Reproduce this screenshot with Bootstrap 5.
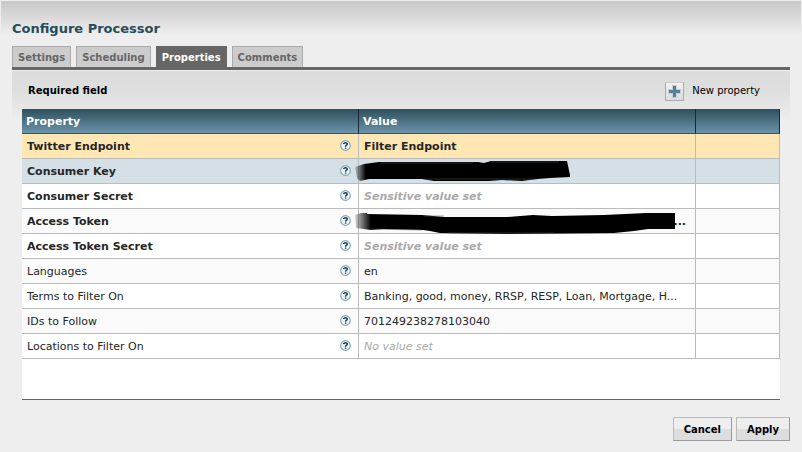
<!DOCTYPE html>
<html lang="en">
<head>
<meta charset="utf-8">
<meta name="viewport" content="width=device-width, initial-scale=1">
<title>Configure Processor</title>
<link href="https://cdn.jsdelivr.net/npm/bootstrap@5.3.0/dist/css/bootstrap.min.css" rel="stylesheet">
<style>
body { font-family: "DejaVu Sans", Verdana, sans-serif; font-size: 11px; line-height: 14px; color: #000; background: #eee; }
.dialog { min-height: 100vh; padding: 21px 11px 10px; border: 1px solid #eee; background: linear-gradient(#c8c8c8, #eee 34px) no-repeat #eee; }
.dialog-title { font-size: 13px; line-height: 14px; color: #264c5a; margin: 0 0 10px; }
.tabs { border-bottom: 3px solid #666; gap: 5px; }
.tabs .nav-link { height: 21px; padding: 4px 5px 0; border: 1px solid #aaa; border-bottom: 0; border-radius: 0; background: #ccc; color: #666; font-size: 10px; font-weight: 700; }
.tabs .nav-link.active { background: #666; border-color: #666; color: #fff; }
.panel { margin-top: 1px; padding: 0 10px; background: linear-gradient(#dcdcdc, #dfdfdf 20px, #eee 50px) no-repeat; }
.panel-bar { height: 38px; padding: 2px 20px 0 6px; font-size: 10px; }
.add-btn { width: 19px; height: 19px; border: 1px solid #aaa; border-top-color: #ccc; background: linear-gradient(#f2f2f2, #ddd); }
.grid-box { background: #fff; border-bottom: 1px solid #666; }
.props { table-layout: fixed; margin: 0; width: 100%; border-collapse: separate; border-spacing: 0; color: #262626; }
.props th, .props td { height: 25px; padding: 2px 9px 0 5px; vertical-align: middle; border-right: 1px solid #bbb; border-bottom: 1px solid #bbb; white-space: nowrap; }
.props thead th { padding-left: 4px; color: #fff; border-right-color: #152c38; border-bottom-color: #2f5566; background: linear-gradient(#2f505c, #6b93aa); }
.col-main { width: 44.46%; }
.props tbody th { font-weight: 400; padding-right: 7px; }
.props tbody .required > * { font-weight: 700; }
.props tbody tr:nth-child(even) { background: #fafafa; }
.props tbody tr.picked { background: #ffe7b3; }
.props tbody tr.hovered { background: #d4dfe6; }
.props .unset { color: #aaa; font-style: italic; }
.help { width: 11px; height: 11px; }
.value-cell { position: relative; }
.redaction { position: absolute; left: -5px; top: 0; z-index: 1; }
.ellipsis-end { display: block; text-align: right; }
.actions { margin-top: 17px; }
.action { height: 24px; padding: 1px 10px 0; border: 1px solid #bbb; border-right-color: #999; border-bottom-color: #999; border-radius: 0; background: linear-gradient(#eee 50%, #ddd 50%); color: #000; font-size: 10px; line-height: 14px; font-weight: 700; }
.action:hover { background: #ddd; }
</style>
</head>
<body>
<svg class="d-none" aria-hidden="true">
<symbol id="help" viewBox="0 0 11 11">
<circle cx="5.5" cy="5.5" r="4.8" fill="#f3f8fa" stroke="#82a8ba" stroke-width="1.2"/>
<path d="M3.6 4.2Q3.8 2.7 5.5 2.7T7.3 4.1Q7.3 4.9 6.2 5.4Q5.6 5.8 5.6 6.7M5.6 7.4V8.8" fill="none" stroke="#1d4254" stroke-width="1.5"/>
</symbol>
</svg>
<main class="dialog d-flex flex-column">
<h1 class="dialog-title fw-bold">Configure Processor</h1>
<nav class="nav tabs" aria-label="Configuration">
<a class="nav-link" href="#settings">Settings</a>
<a class="nav-link" href="#scheduling">Scheduling</a>
<a class="nav-link active" aria-current="page" href="#properties">Properties</a>
<a class="nav-link" href="#comments">Comments</a>
</nav>
<section class="panel flex-grow-1 d-flex flex-column" id="properties">
<div class="panel-bar d-flex align-items-center justify-content-between">
<span class="fw-bold">Required field</span>
<div class="d-flex align-items-center gap-2">
<button class="add-btn p-0 d-flex align-items-center justify-content-center" id="add" type="button" aria-label="New property">
<svg width="13" height="13" viewBox="0 0 13 13"><path d="M4 0H9V4H13V9H9V13H4V9H0V4H4Z" fill="#ccc"/><path d="M5 1H8V5H12V8H8V12H5V8H1V5H5Z" fill="#54809a"/></svg>
</button>
<label for="add">New property</label>
</div>
</div>
<div class="grid-box flex-grow-1">
<table class="props">
<thead><tr><th class="col-main" scope="col">Property</th><th class="col-main" scope="col">Value</th><th aria-label="Actions"></th></tr></thead>
<tbody>
<tr class="required picked"><th scope="row"><div class="d-flex justify-content-between align-items-start">Twitter Endpoint<svg class="help"><use href="#help"/></svg></div></th><td>Filter Endpoint</td><td></td></tr>
<tr class="required hovered"><th scope="row"><div class="d-flex justify-content-between align-items-start">Consumer Key<svg class="help"><use href="#help"/></svg></div></th><td class="value-cell">
<svg class="redaction" width="218" height="24" viewBox="0 0 218 24" role="img" aria-label="Redacted"><defs><linearGradient id="fade"><stop offset="0" stop-opacity=".15"/><stop offset=".05"/></linearGradient></defs><path d="M1 8L10 5L25 3H124L130 4L137 2H213L216 16V18L196 19L183 20L168 22L148 21L135 22H80L68 20L15 20L6 22L3 19Z" fill="url(#fade)"/><path d="M26 4H120M137 3H205M70 20H183" stroke="#555" stroke-opacity=".5" fill="none"/></svg></td><td></td></tr>
<tr class="required"><th scope="row"><div class="d-flex justify-content-between align-items-start">Consumer Secret<svg class="help"><use href="#help"/></svg></div></th><td class="unset">Sensitive value set</td><td></td></tr>
<tr class="required"><th scope="row"><div class="d-flex justify-content-between align-items-start">Access Token<svg class="help"><use href="#help"/></svg></div></th><td class="value-cell">
<svg class="redaction" width="322" height="25" viewBox="0 0 322 25" role="img" aria-label="Redacted"><path d="M1 6L7 4H13V5L68 6L90 8H153L179 6L198 7L250 6L292 4H321V20H294L280 22L260 24L153 25L86 24L76 22L69 21L29 20L17 21L2 19Z" fill="url(#fade)"/><path d="M70 7H90M16 20L68 21M94 24H200" stroke="#555" stroke-opacity=".5" fill="none"/></svg><span class="ellipsis-end">...</span></td><td></td></tr>
<tr class="required"><th scope="row"><div class="d-flex justify-content-between align-items-start">Access Token Secret<svg class="help"><use href="#help"/></svg></div></th><td class="unset">Sensitive value set</td><td></td></tr>
<tr><th scope="row"><div class="d-flex justify-content-between align-items-start">Languages<svg class="help"><use href="#help"/></svg></div></th><td>en</td><td></td></tr>
<tr><th scope="row"><div class="d-flex justify-content-between align-items-start">Terms to Filter On<svg class="help"><use href="#help"/></svg></div></th><td>Banking, good, money, RRSP, RESP, Loan, Mortgage, H...</td><td></td></tr>
<tr><th scope="row"><div class="d-flex justify-content-between align-items-start">IDs to Follow<svg class="help"><use href="#help"/></svg></div></th><td>701249238278103040</td><td></td></tr>
<tr><th scope="row"><div class="d-flex justify-content-between align-items-start">Locations to Filter On<svg class="help"><use href="#help"/></svg></div></th><td class="unset">No value set</td><td></td></tr>
</tbody>
</table>
</div>
</section>
<footer class="actions d-flex justify-content-end gap-1">
<button class="btn action" type="button">Cancel</button>
<button class="btn action" type="button">Apply</button>
</footer>
</main>
<script src="https://cdn.jsdelivr.net/npm/bootstrap@5.3.0/dist/js/bootstrap.bundle.min.js"></script>
</body>
</html>
